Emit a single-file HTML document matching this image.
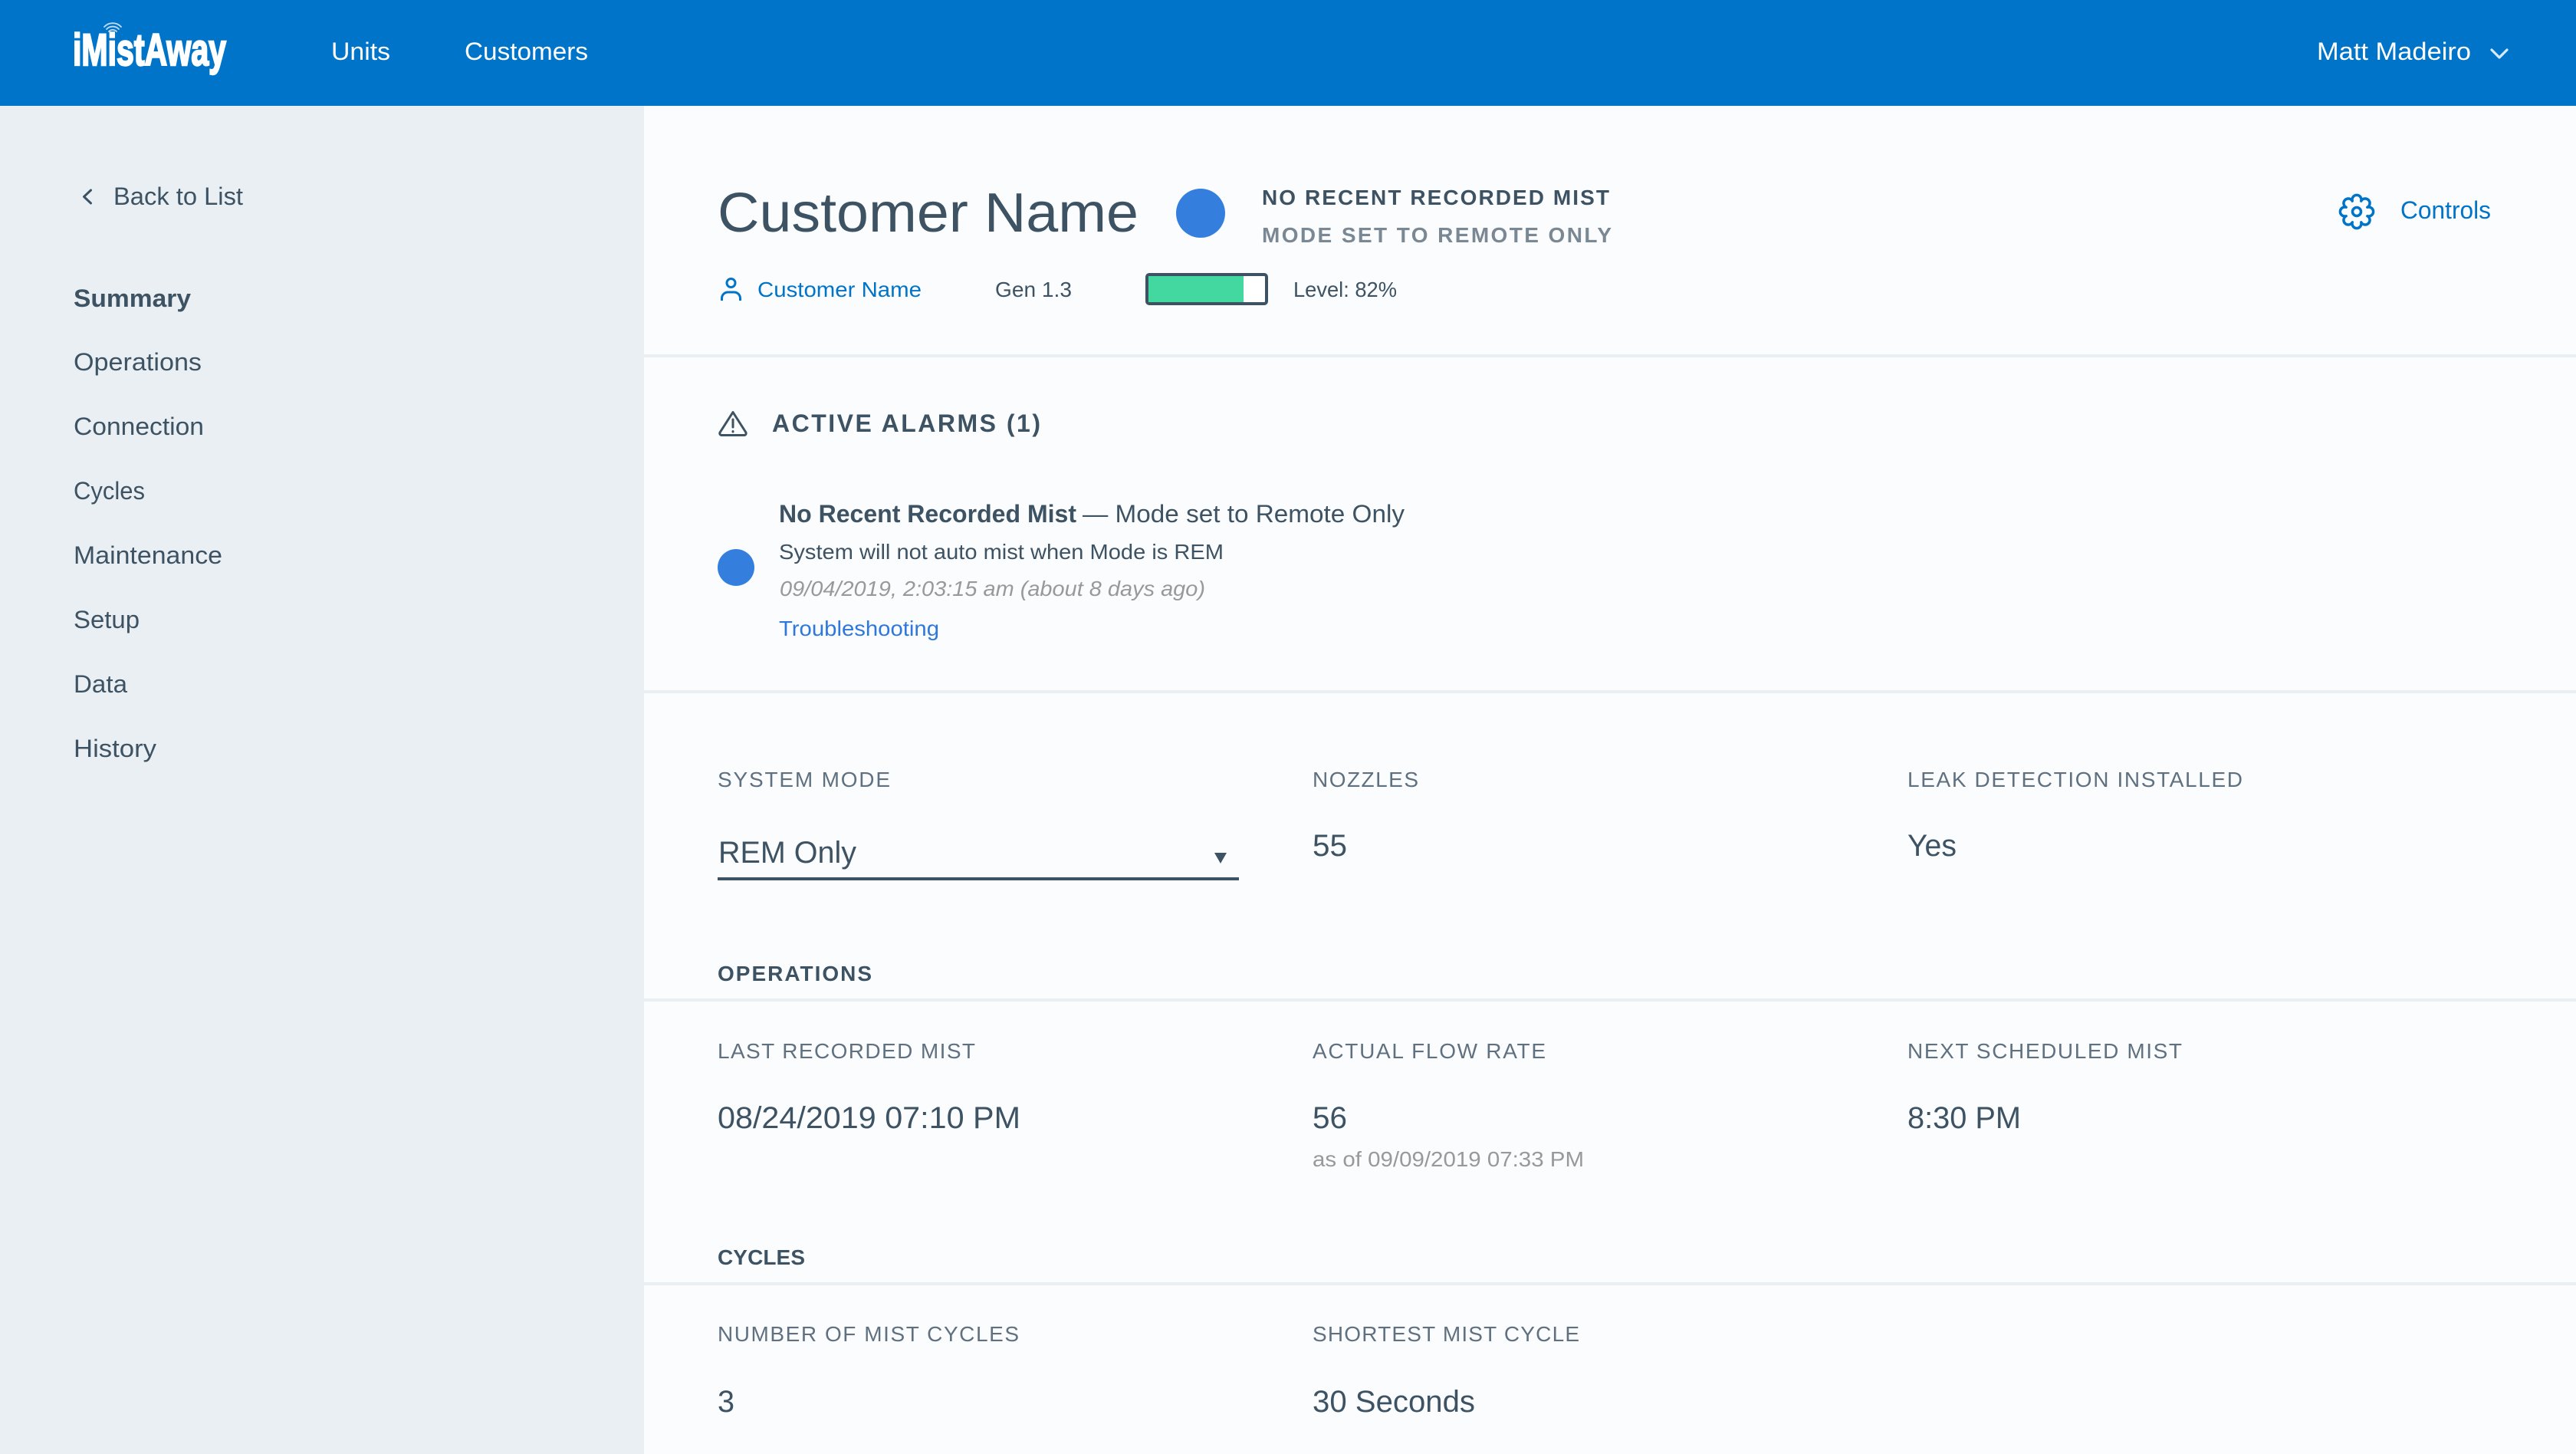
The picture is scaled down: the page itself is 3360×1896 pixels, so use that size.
<!DOCTYPE html>
<html lang="en">
<head>
<meta charset="utf-8">
<title>iMistAway - Customer Name</title>
<style>
html,body{margin:0;padding:0;width:3360px;height:1896px;overflow:hidden;background:#FBFCFE}
svg{display:block}
text{font-family:"Liberation Sans",sans-serif;font-size:32px;fill:#3D5363;white-space:pre}
.w{fill:#fff}
.lab{font-size:28px;fill:#5F7180}
.val{font-size:40px}
.sm{font-size:28px}
.b{font-weight:bold}
.link{fill:#0074C8}
</style>
</head>
<body>
<svg width="3360" height="1896" viewBox="0 0 3360 1896" xmlns="http://www.w3.org/2000/svg">
<rect width="3360" height="1896" fill="#FBFCFE"/>
<rect x="0" y="138" width="840" height="1758" fill="#EAEFF3"/>
<rect x="0" y="0" width="3360" height="138" fill="#0074C8"/>
<rect x="840" y="462" width="2520" height="4" fill="#EAEFF3"/>
<rect x="840" y="900" width="2520" height="4" fill="#EAEFF3"/>
<rect x="840" y="1302" width="2520" height="4" fill="#EAEFF3"/>
<rect x="840" y="1672" width="2520" height="4" fill="#EAEFF3"/>

<!-- logo -->
<text x="95" y="85" class="w b" style="font-size:58px;stroke:#fff;stroke-width:2.4px" textLength="200" lengthAdjust="spacingAndGlyphs">iMistAway</text>
<g fill="none" stroke="#fff" stroke-opacity=".75" stroke-width="1.8" stroke-linecap="round">
<path d="M142 41a7 7 0 0 1 10 0"/><path d="M139 38a11 11 0 0 1 16 0"/><path d="M136 35a15 15 0 0 1 22 0"/>
</g>

<!-- nav -->
<text x="432" y="78" class="w" textLength="77" lengthAdjust="spacingAndGlyphs">Units</text>
<text x="606" y="78" class="w" textLength="161" lengthAdjust="spacingAndGlyphs">Customers</text>
<text x="3022" y="78" class="w" textLength="201" lengthAdjust="spacingAndGlyphs">Matt Madeiro</text>
<path d="M3250 65l10 10 10-10" fill="none" stroke="#fff" stroke-opacity=".85" stroke-width="3.2" stroke-linecap="round" stroke-linejoin="round"/>

<!-- sidebar -->
<path d="M118.500 248l-9 8.500 9 8.500" fill="none" stroke="#3D5363" stroke-width="3" stroke-linecap="round" stroke-linejoin="round"/>
<text x="148" y="267" textLength="169" lengthAdjust="spacingAndGlyphs">Back to List</text>
<text x="96" y="400" class="b" textLength="153" lengthAdjust="spacingAndGlyphs">Summary</text>
<text x="96" y="483" textLength="167" lengthAdjust="spacingAndGlyphs">Operations</text>
<text x="96" y="567" textLength="170" lengthAdjust="spacingAndGlyphs">Connection</text>
<text x="96" y="651" textLength="93" lengthAdjust="spacingAndGlyphs">Cycles</text>
<text x="96" y="735" textLength="194" lengthAdjust="spacingAndGlyphs">Maintenance</text>
<text x="96" y="819" textLength="86" lengthAdjust="spacingAndGlyphs">Setup</text>
<text x="96" y="903" textLength="70" lengthAdjust="spacingAndGlyphs">Data</text>
<text x="96" y="987" textLength="108" lengthAdjust="spacingAndGlyphs">History</text>

<!-- title block -->
<text x="936" y="302" style="font-size:72px" textLength="549" lengthAdjust="spacingAndGlyphs">Customer Name</text>
<circle cx="1566" cy="278" r="32" fill="#347FDD"/>
<text x="1646" y="267" class="sm b" textLength="453" lengthAdjust="spacing">NO RECENT RECORDED MIST</text>
<text x="1646" y="316" class="sm b" style="fill:#7A8894" textLength="456" lengthAdjust="spacing">MODE SET TO REMOTE ONLY</text>

<g fill="none" stroke="#0074C8" stroke-width="3">
<circle cx="953.500" cy="369" r="5.500"/>
<path d="M941.500 392v-3a8 8 0 0 1 8-8h8a8 8 0 0 1 8 8v3"/>
</g>
<text x="988" y="387" class="sm link" textLength="214" lengthAdjust="spacingAndGlyphs">Customer Name</text>
<text x="1298" y="387" class="sm" textLength="100" lengthAdjust="spacingAndGlyphs">Gen 1.3</text>
<rect x="1496" y="358" width="156" height="38" rx="3" fill="#fff" stroke="#3D5363" stroke-width="4"/>
<rect x="1498" y="360" width="124" height="34" fill="#43D8A0"/>
<text x="1687" y="387" class="sm" textLength="135" lengthAdjust="spacingAndGlyphs">Level: 82%</text>

<!-- controls -->
<g transform="translate(3074 276)" fill="none" stroke="#0074C8" stroke-width="3.500" stroke-linejoin="round">
<path d="M-5.740-13.860A6 6 0 1 1 5.740-13.860A6 6 0 1 1 13.860-5.740A6 6 0 1 1 13.860 5.740A6 6 0 1 1 5.740 13.860A6 6 0 1 1-5.740 13.860A6 6 0 1 1-13.860 5.740A6 6 0 1 1-13.860-5.740A6 6 0 1 1-5.740-13.860Z"/>
<circle r="5.500"/>
</g>
<text x="3131" y="285" class="link" textLength="118" lengthAdjust="spacingAndGlyphs">Controls</text>

<!-- alarms -->
<g fill="none" stroke="#3D5363" stroke-width="3" stroke-linecap="round" stroke-linejoin="round">
<path d="M956 537.500L939 564a2.500 2.500 0 0 0 2 3.500h30a2.500 2.500 0 0 0 2-3.500Z"/>
<path d="M956 547v10"/>
<path d="M956 562.500v.5"/>
</g>
<text x="1007" y="563" class="b" textLength="350" lengthAdjust="spacing">ACTIVE ALARMS (1)</text>
<circle cx="960" cy="740" r="24" fill="#347FDD"/>
<text x="1016" y="681" class="b" textLength="388" lengthAdjust="spacingAndGlyphs">No Recent Recorded Mist</text>
<text x="1412" y="681" textLength="420" lengthAdjust="spacingAndGlyphs">— Mode set to Remote Only</text>
<text x="1016" y="729" class="sm" textLength="580" lengthAdjust="spacingAndGlyphs">System will not auto mist when Mode is REM</text>
<text x="1017" y="777" class="sm" style="font-style:italic;fill:#999" textLength="555" lengthAdjust="spacingAndGlyphs">09/04/2019, 2:03:15 am (about 8 days ago)</text>
<text x="1016" y="829" class="sm" style="fill:#2F78DB" textLength="209" lengthAdjust="spacingAndGlyphs">Troubleshooting</text>

<!-- fields -->
<text x="936" y="1026" class="lab" textLength="225" lengthAdjust="spacing">SYSTEM MODE</text>
<text x="937" y="1125" class="val" textLength="180" lengthAdjust="spacingAndGlyphs">REM Only</text>
<path d="M1584 1112h16l-8 14Z" fill="#3D5363"/>
<rect x="936" y="1144" width="680" height="4" fill="#3D5363"/>
<text x="1712" y="1026" class="lab" textLength="138" lengthAdjust="spacing">NOZZLES</text>
<text x="1712" y="1116" class="val" textLength="45" lengthAdjust="spacingAndGlyphs">55</text>
<text x="2488" y="1026" class="lab" textLength="437" lengthAdjust="spacing">LEAK DETECTION INSTALLED</text>
<text x="2488" y="1116" class="val" textLength="64" lengthAdjust="spacingAndGlyphs">Yes</text>

<text x="936" y="1279" class="sm b" textLength="201" lengthAdjust="spacing">OPERATIONS</text>
<text x="936" y="1380" class="lab" textLength="336" lengthAdjust="spacing">LAST RECORDED MIST</text>
<text x="936" y="1471" class="val" textLength="395" lengthAdjust="spacingAndGlyphs">08/24/2019 07:10 PM</text>
<text x="1712" y="1380" class="lab" textLength="304" lengthAdjust="spacing">ACTUAL FLOW RATE</text>
<text x="1712" y="1471" class="val" textLength="45" lengthAdjust="spacingAndGlyphs">56</text>
<text x="1712" y="1521" class="sm" style="fill:#999" textLength="354" lengthAdjust="spacingAndGlyphs">as of 09/09/2019 07:33 PM</text>
<text x="2488" y="1380" class="lab" textLength="358" lengthAdjust="spacing">NEXT SCHEDULED MIST</text>
<text x="2488" y="1471" class="val" textLength="148" lengthAdjust="spacingAndGlyphs">8:30 PM</text>

<text x="936" y="1649" class="sm b" textLength="114" lengthAdjust="spacing">CYCLES</text>
<text x="936" y="1749" class="lab" textLength="393" lengthAdjust="spacing">NUMBER OF MIST CYCLES</text>
<text x="936" y="1841" class="val" textLength="22" lengthAdjust="spacingAndGlyphs">3</text>
<text x="1712" y="1749" class="lab" textLength="348" lengthAdjust="spacing">SHORTEST MIST CYCLE</text>
<text x="1712" y="1841" class="val" textLength="212" lengthAdjust="spacingAndGlyphs">30 Seconds</text>
</svg>
</body>
</html>
